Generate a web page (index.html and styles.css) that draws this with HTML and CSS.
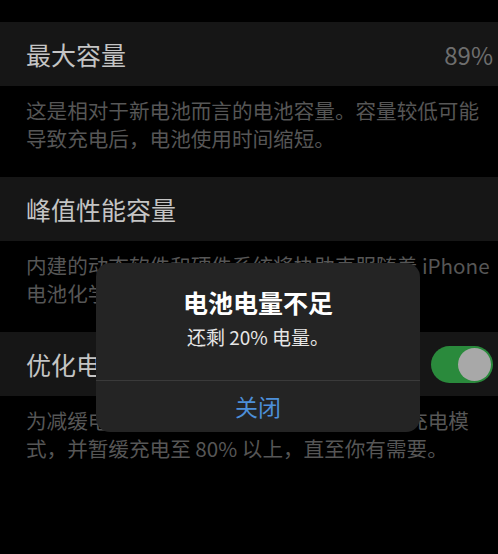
FILE: index.html
```html
<!DOCTYPE html>
<html lang="zh-CN">
<head>
<meta charset="UTF-8">
<meta name="viewport" content="width=device-width, initial-scale=1.0">
<title>电池健康</title>
<link rel="stylesheet" href="styles.css">
</head>
<body>
<div class="page">
    <div class="group">
        <div class="row">
            <span class="label">最大容量</span>
            <span class="value">89%</span>
        </div>
        <p class="desc">这是相对于新电池而言的电池容量。容量较低可能导致充电后，电池使用时间缩短。</p>
    </div>
    <div class="group">
        <div class="row">
            <span class="label">峰值性能容量</span>
        </div>
        <p class="desc">内建的动态软件和硬件系统将协助克服随着 iPhone 电池化学老化而可能引起的性能影响。</p>
    </div>
    <div class="group">
        <div class="row">
            <span class="label">优化电池充电</span>
            <div class="toggle on"><div class="knob"></div></div>
        </div>
        <p class="desc">为减缓电池老化，iPhone 会适时进入优化充电模式，并暂缓充电至 80% 以上，直至你有需要。</p>
    </div>

    <div class="alert">
        <div class="alert-body">
            <div class="alert-title">电池电量不足</div>
            <div class="alert-text">还剩 20% 电量。</div>
        </div>
        <div class="alert-button">关闭</div>
    </div>
</div>
</body>
</html>
```

FILE: styles.css
```css
body {
    margin: 0;
    padding: 0;
    background-color: #000;
    font-family: 'Noto Sans CJK SC', 'Noto Sans', sans-serif;
}
.page {
    position: relative;
    width: 498px;
    height: 554px;
    padding-top: 22px;
    box-sizing: border-box;
    overflow: hidden;
}
.row {
    height: 64px;
    display: flex;
    align-items: center;
    justify-content: space-between;
    padding: 0 5px 0 26px;
    background-color: #161616;
}
.label {
    font-size: 25px;
    color: #c4c4c4;
}
.value {
    font-size: 24px;
    color: #6e6e6e;
}
.desc {
    margin: 0;
    padding: 10px 0 25px 26px;
    font-size: 20.6px;
    line-height: 28px;
    color: #565656;
}
.toggle {
    width: 62px;
    height: 37px;
    border-radius: 19px;
    background-color: #2a8a3c;
    display: flex;
    align-items: center;
    justify-content: flex-end;
    padding: 0 2px;
    box-sizing: border-box;
}
.knob {
    width: 33px;
    height: 33px;
    border-radius: 50%;
    background-color: #a8a8a8;
}
.alert {
    position: absolute;
    left: 96px;
    top: 263px;
    width: 324px;
    border-radius: 14px;
    background-color: #242424;
    text-align: center;
    overflow: hidden;
}
.alert-body {
    padding: 24px 16px 30px;
    border-bottom: 1px solid #3a3a3a;
}
.alert-title {
    font-size: 25px;
    line-height: 30px;
    font-weight: bold;
    color: #fff;
}
.alert-text {
    margin-top: 7px;
    font-size: 19px;
    line-height: 26px;
    color: #e6e6e6;
}
.alert-button {
    height: 51px;
    line-height: 51px;
    font-size: 23px;
    color: #4d8fd9;
}
```
